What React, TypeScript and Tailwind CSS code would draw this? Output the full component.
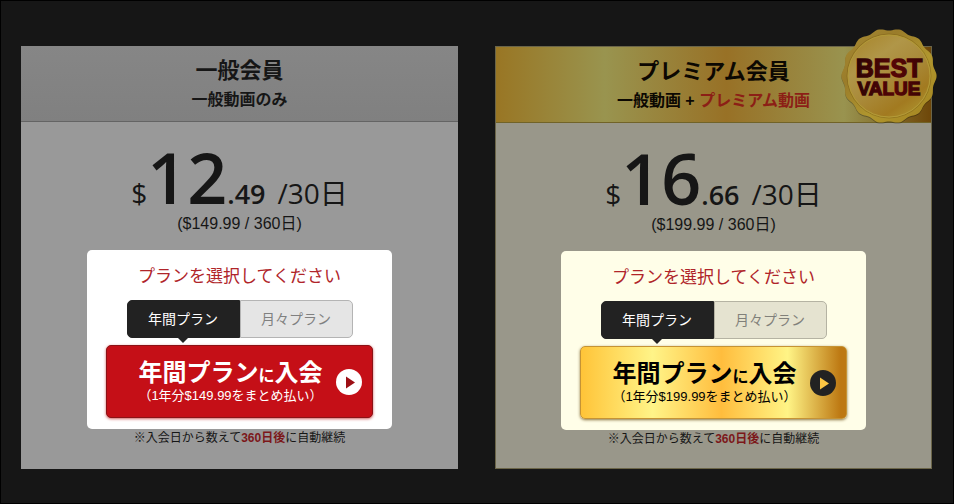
import { useState } from "react";
import clsx from "clsx";

interface Plan {
  id: string;
  premium: boolean;
  title: string;
  subtitle: React.ReactNode;
  whole: string;
  cents: string;
  total: string;
}

const plans: Plan[] = [
  {
    id: "standard",
    premium: false,
    title: "一般会員",
    subtitle: "一般動画のみ",
    whole: "12",
    cents: ".49",
    total: "$149.99",
  },
  {
    id: "premium",
    premium: true,
    title: "プレミアム会員",
    subtitle: (
      <>
        一般動画 + <span className="text-[#8c1f16]">プレミアム動画</span>
      </>
    ),
    whole: "16",
    cents: ".66",
    total: "$199.99",
  },
];

// wavy outline of the wax seal
function sealPath(radius: number, wave: number, lobes: number) {
  const points: string[] = [];
  for (let i = 0; i < 180; i++) {
    const a = (i / 180) * Math.PI * 2;
    const r = radius + wave * Math.cos(lobes * a);
    points.push(`${(50 + r * Math.cos(a)).toFixed(2)} ${(50 + r * Math.sin(a)).toFixed(2)}`);
  }
  return `M${points.join("L")}Z`;
}

function BestValueSeal() {
  return (
    <svg viewBox="0 0 100 100" className="absolute -top-[21px] -right-2 size-[100px]" role="img" aria-label="BEST VALUE">
      <defs>
        <linearGradient id="seal-rim" x1="0" y1="0" x2="1" y2="1">
          <stop offset="0" stopColor="#a88c34" />
          <stop offset="0.3" stopColor="#9a7c2a" />
          <stop offset="0.6" stopColor="#b0962e" />
          <stop offset="1" stopColor="#a3831f" />
        </linearGradient>
        <linearGradient id="seal-face" x1="0.1" y1="0" x2="0.8" y2="1">
          <stop offset="0" stopColor="#a8852a" />
          <stop offset="0.3" stopColor="#b09648" />
          <stop offset="0.55" stopColor="#a98a3a" />
          <stop offset="0.82" stopColor="#a27a20" />
          <stop offset="1" stopColor="#ac922e" />
        </linearGradient>
        <linearGradient id="seal-text" gradientUnits="userSpaceOnUse" x1="16" y1="0" x2="84" y2="0">
          <stop offset="0" stopColor="#2c0304" />
          <stop offset="0.6" stopColor="#560506" />
          <stop offset="1" stopColor="#3a0304" />
        </linearGradient>
      </defs>
      <path d={sealPath(46.5, 1.1, 14)} fill="#000" opacity="0.3" transform="translate(0 1)" />
      <path d={sealPath(46.5, 1.1, 14)} fill="url(#seal-rim)" />
      <circle cx="50" cy="50" r="42" fill="none" stroke="#7f6218" strokeWidth="1" opacity="0.5" />
      <circle cx="50" cy="50" r="41" fill="url(#seal-face)" stroke="#b39a38" strokeWidth="1" />
      <g
        fill="url(#seal-text)"
        stroke="url(#seal-text)"
        strokeWidth="1.3"
        textAnchor="middle"
        fontFamily="Liberation Sans, Arial, sans-serif"
        fontWeight="700"
      >
        <text x="50" y="51" fontSize="25">BEST</text>
        <text x="50" y="69" fontSize="19">VALUE</text>
      </g>
    </svg>
  );
}

function PlayIcon({ premium }: { premium: boolean }) {
  return (
    <svg viewBox="0 0 26 26" className="size-[26px] shrink-0" aria-hidden="true">
      <circle cx="13" cy="13" r="13" fill={premium ? "#222222" : "#ffffff"} />
      <path d="M10 7.5L19 13.5L10 19.5Z" fill={premium ? "#fdc744" : "#9c0f14"} />
    </svg>
  );
}

function PlanTabs({ premium }: { premium: boolean }) {
  const [active, setActive] = useState(0);

  return (
    <div role="tablist" className="mx-auto flex h-[38px] w-[226px]">
      {["年間プラン", "月々プラン"].map((label, index) => (
        <button
          key={label}
          type="button"
          role="tab"
          aria-selected={active === index}
          onClick={() => setActive(index)}
          className={clsx(
            "relative flex-1 border text-sm first:rounded-l-[5px] last:rounded-r-[5px]",
            active === index && "border-[#222222] bg-[#222222] text-white",
            active !== index && !premium && "border-[#b4b4b4] bg-[#e5e5e5] text-[#808080]",
            active !== index && premium && "border-[#b5b3a3] bg-[#e5e3d0] text-[#81807a]",
          )}
        >
          {label}
          {active === index && (
            <span className="absolute top-full left-1/2 -translate-x-1/2 border-x-[6px] border-t-[6px] border-x-transparent border-t-[#222222]" />
          )}
        </button>
      ))}
    </div>
  );
}

function PlanCard({ plan }: { plan: Plan }) {
  const { premium } = plan;

  return (
    <section
      aria-labelledby={`${plan.id}-title`}
      className={clsx(
        "relative pb-5 text-center text-[#161616]",
        premium ? "border border-[#6b6548] bg-[#99978a]" : "bg-[#999999]",
      )}
    >
      <header
        className={clsx(
          "border-b pt-2.5 pb-[7px]",
          premium
            ? "border-[#716328] bg-[linear-gradient(90deg,#997624_0%,#99944f_25%,#987126_53%,#99934f_80%,#6e4709_100%)] text-[#0c0802]"
            : "border-[#646464] bg-linear-to-b from-[#868686] to-[#808080]",
        )}
      >
        <h2 id={`${plan.id}-title`} className="text-[22px] leading-[30px] font-bold">
          {plan.title}
        </h2>
        <p className="text-base leading-7 font-bold">{plan.subtitle}</p>
      </header>

      <p className="mt-[21px] flex h-[71px] items-baseline justify-center font-['Open_Sans','Noto_Sans_CJK_JP',sans-serif] text-[28px] leading-[68px]">
        <span>$</span>
        <span className="text-[70px] font-semibold">{plan.whole}</span>
        <span className="text-[27px] font-semibold">{plan.cents}</span>
        <span className="ml-3">/30日</span>
      </p>
      <p className="text-base leading-5">({plan.total} / 360日)</p>

      <div
        className={clsx(
          "mx-auto mt-4 w-[305px] rounded-[5px] px-[18px] pt-[13px] pb-[11px]",
          premium ? "bg-[#fffee8]" : "bg-white",
        )}
      >
        <p className="mb-2.5 text-[17px] leading-[27px] text-[#b0252a]">プランを選択してください</p>
        <PlanTabs premium={premium} />
        <button
          type="button"
          className={clsx(
            "mx-auto mt-[7px] flex h-[73px] w-[267px] items-center rounded-[5px] border pr-2.5 pl-[18px] shadow-[0_1px_3px]",
            premium
              ? "border-[#c59335] bg-[linear-gradient(90deg,#ffc438_0%,#fff488_27%,#ffbd3d_53%,#fff486_78%,#bd7812_98%)] text-black shadow-[#8a7440]"
              : "border-[#8b1216] bg-[#c50f17] text-white shadow-[#d06060]",
          )}
        >
          <span className="flex-1 whitespace-nowrap">
            <span className="block text-2xl leading-7 font-bold">
              年間プラン<span className="text-base">に</span>入会
            </span>
            <span className="block text-[13px] leading-4">（1年分{plan.total}をまとめ払い）</span>
          </span>
          <PlayIcon premium={premium} />
        </button>
      </div>

      <p className="text-xs leading-[18px]">
        ※入会日から数えて<strong className="text-[#7c171a]">360日後</strong>に自動継続
      </p>

      {premium && <BestValueSeal />}
    </section>
  );
}

export default function App() {
  return (
    <main className="grid grid-cols-2 gap-[37px] border border-black bg-[#161616] pt-[45px] pr-[21px] pb-[34px] pl-5 font-['Liberation_Sans','Noto_Sans_CJK_JP',sans-serif]">
      {plans.map((plan) => (
        <PlanCard key={plan.id} plan={plan} />
      ))}
    </main>
  );
}
